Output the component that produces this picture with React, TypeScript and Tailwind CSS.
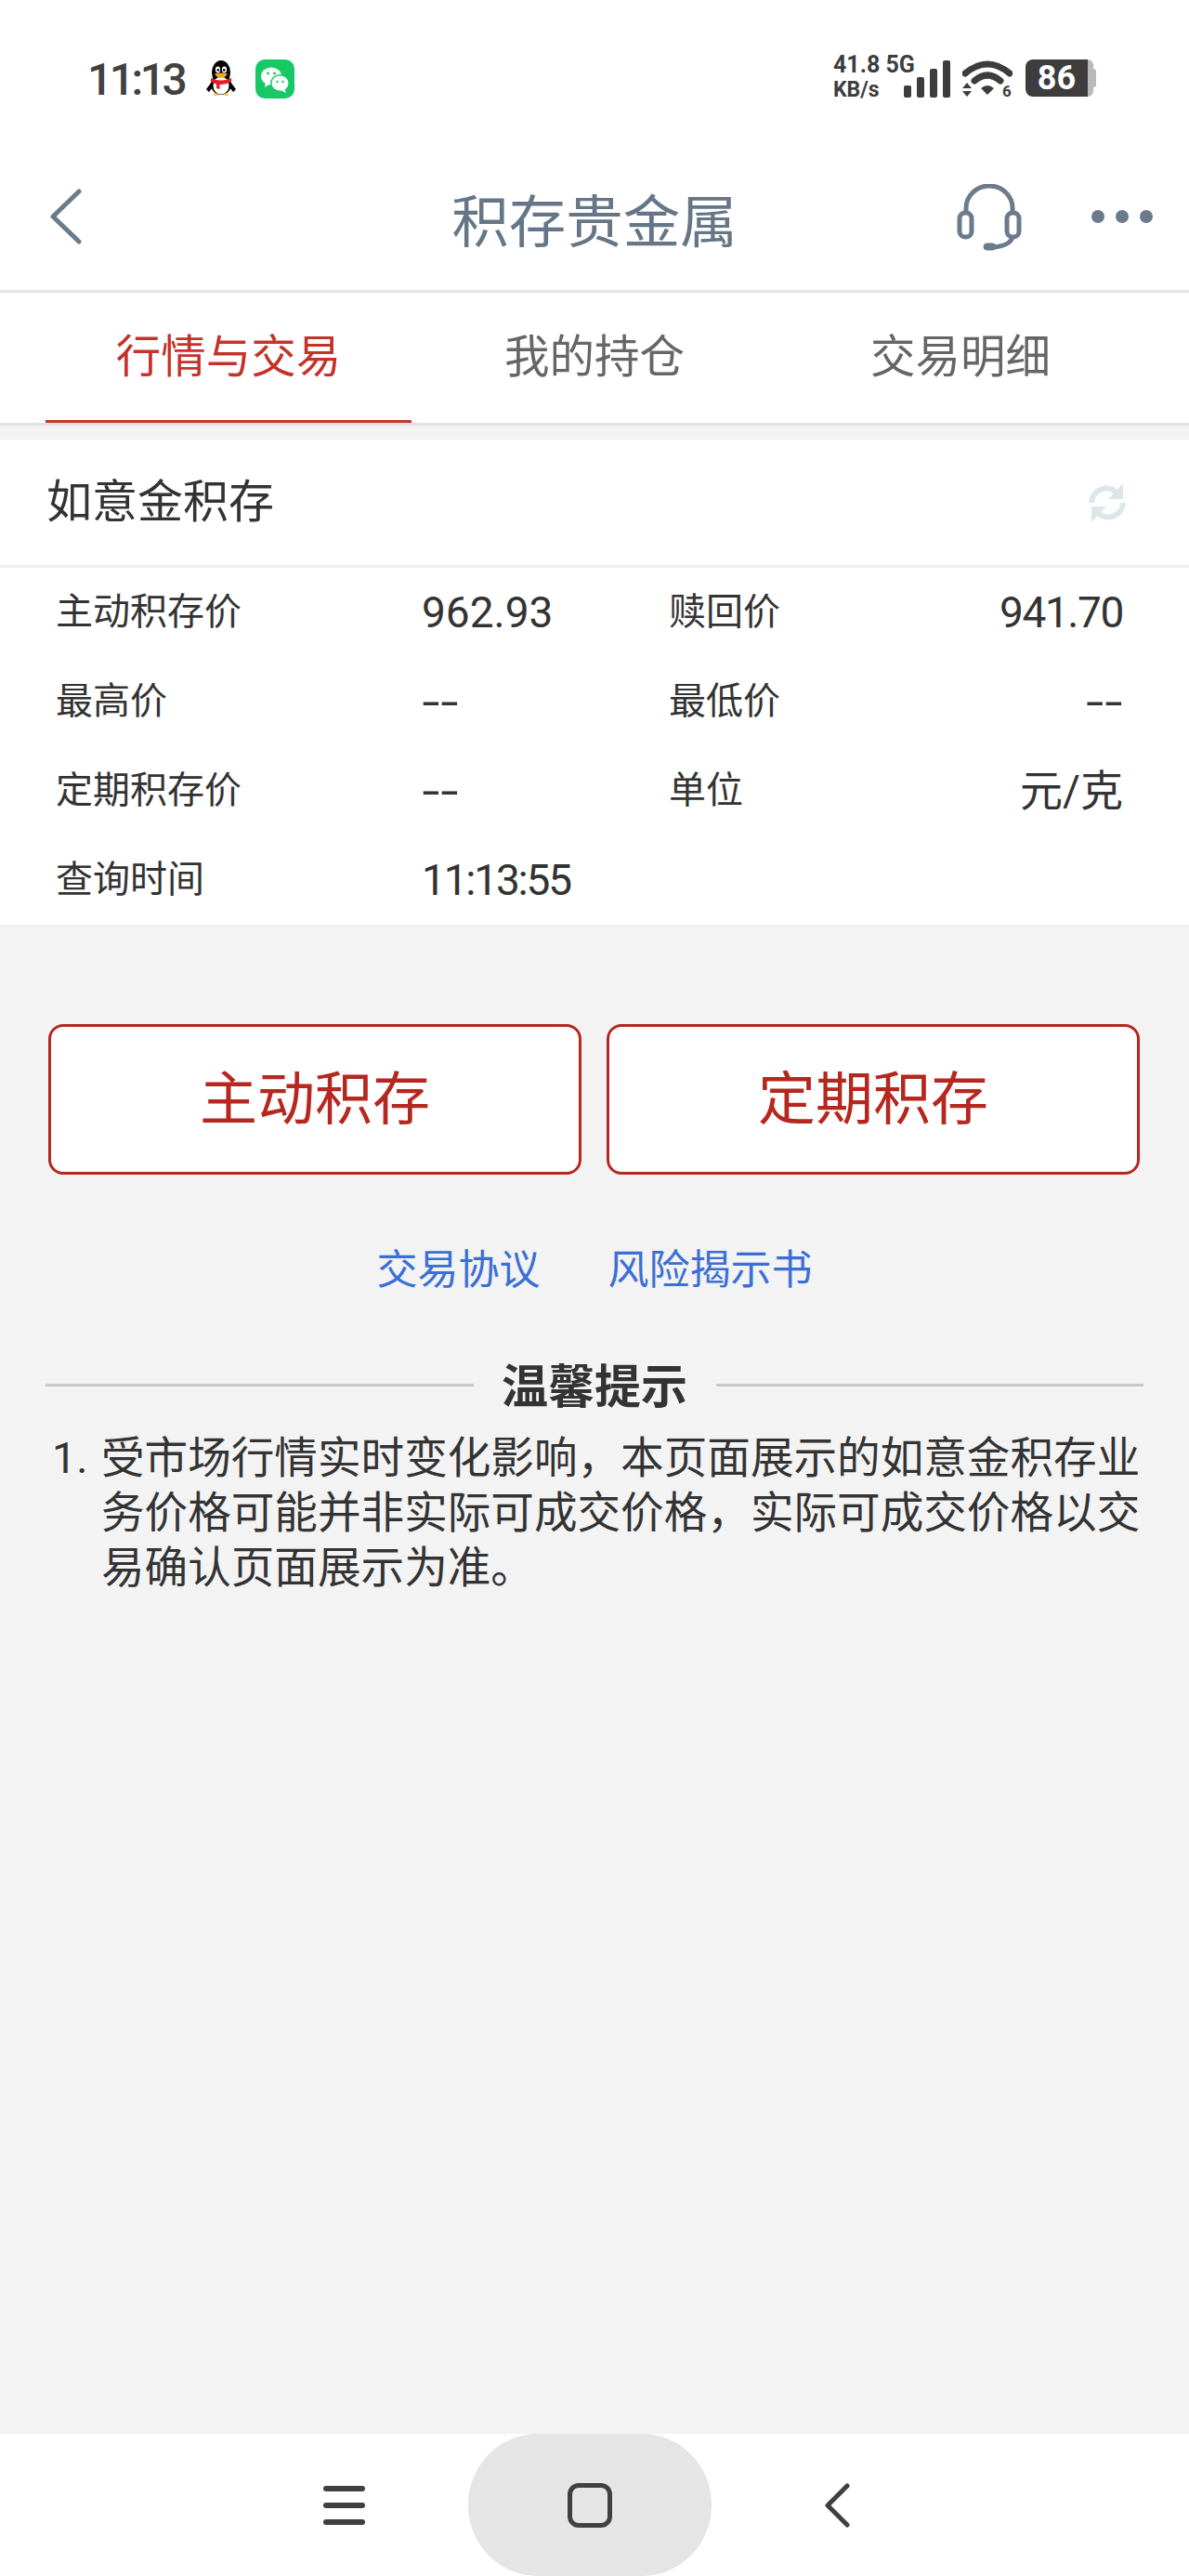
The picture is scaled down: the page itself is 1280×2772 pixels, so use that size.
const cjk = "font-['Roboto','Noto_Sans_CJK_SC',sans-serif]";

const dash = 'text-[70px] leading-none font-light';

const rows = [
  { label: '主动积存价', value: '962.93', cls: 'text-[46px]', label2: '赎回价', value2: '941.70', cls2: 'text-[46px] tracking-[-1.4px]' },
  { label: '最高价', value: '--', cls: dash, label2: '最低价', value2: '--', cls2: dash },
  { label: '定期积存价', value: '--', cls: dash, label2: '单位', value2: '元/克', cls2: 'text-[46px]' },
  { label: '查询时间', value: '11:13:55', cls: 'text-[46px] tracking-[-2.2px]', label2: '', value2: '', cls2: '' },
];

function QQIcon() {
  return (
    <svg width="32" height="38" viewBox="0 0 32 38">
      <ellipse cx="16" cy="13" rx="10" ry="13" fill="#000" />
      <ellipse cx="16" cy="26" rx="11" ry="11" fill="#000" />
      <ellipse cx="16" cy="27" rx="8.5" ry="9.5" fill="#fff" />
      <path d="M6 23 L0 31 L3 34 L7 29Z M26 23 L32 31 L29 34 L25 29Z" fill="#000" />
      <ellipse cx="12.5" cy="10" rx="2.6" ry="3.4" fill="#fff" />
      <ellipse cx="19.5" cy="10" rx="2.6" ry="3.4" fill="#fff" />
      <circle cx="12.8" cy="10.4" r="1.3" fill="#000" />
      <circle cx="19.2" cy="10.4" r="1.3" fill="#000" />
      <path d="M9 14.5 Q16 12.5 23 14.5 Q20 19 16 19 Q12 19 9 14.5Z" fill="#f3a81d" />
      <path d="M5 19 Q16 24 27 19 L27 23 Q22 26 14.5 26 L14.5 31 L11 30 L11 25.5 Q7 24.5 5 23Z" fill="#e2202c" />
      <path d="M8 36 Q11 34 14 37.5 L8 38Z M24 36 Q21 34 18 37.5 L24 38Z" fill="#f6c24a" />
    </svg>
  );
}

function WeChatIcon() {
  return (
    <svg width="42" height="42" viewBox="0 0 42 42">
      <rect width="42" height="42" rx="10" fill="#17c964" />
      <ellipse cx="17" cy="18" rx="11" ry="9.5" fill="#fff" />
      <path d="M11 24 L10 30 L16 26Z" fill="#fff" />
      <ellipse cx="26.5" cy="25.5" rx="10.5" ry="9.5" fill="#17c964" />
      <ellipse cx="26.5" cy="25.5" rx="9" ry="8" fill="#fff" />
      <path d="M31 31 L33 36 L27 33Z" fill="#fff" />
      <circle cx="13.5" cy="15" r="1.4" fill="#17c964" />
      <circle cx="20.5" cy="15" r="1.4" fill="#17c964" />
      <circle cx="23.5" cy="24" r="1.2" fill="#17c964" />
      <circle cx="29.5" cy="24" r="1.2" fill="#17c964" />
    </svg>
  );
}

function SignalIcon() {
  return (
    <svg width="50" height="40" viewBox="0 0 50 40" fill="#3d3d3d">
      <rect x="0" y="27" width="8" height="13" rx="2" />
      <rect x="14" y="18" width="8" height="22" rx="2" />
      <rect x="28" y="9" width="8" height="31" rx="2" />
      <rect x="42" y="0" width="8" height="40" rx="2" />
    </svg>
  );
}

function WifiIcon() {
  return (
    <svg width="54" height="42" viewBox="0 0 54 42" fill="none">
      <path d="M3 14 Q27 -6 51 14" stroke="#3d3d3d" strokeWidth="7" strokeLinecap="round" />
      <path d="M13 22 Q27 10 41 22" stroke="#3d3d3d" strokeWidth="7" strokeLinecap="round" />
      <path d="M20 30 Q27 24 34 30 L27 37Z" fill="#3d3d3d" />
      <path d="M5 24 L10 30 L0 30Z M0 33 L10 33 L5 39Z" fill="#3d3d3d" />
      <text x="43" y="39" fontSize="17" fontWeight="700" fill="#3d3d3d" fontFamily="Roboto, sans-serif">6</text>
    </svg>
  );
}

function HeadsetIcon() {
  return (
    <svg width="70" height="72" viewBox="0 0 70 72" fill="none" stroke="#6b7b8c" strokeWidth="5">
      <path d="M10 30 V26 A25 24 0 0 1 60 26 V30" />
      <rect x="3" y="31" width="13" height="26" rx="6" />
      <rect x="54" y="31" width="13" height="26" rx="6" />
      <path d="M60 57 Q58 66 40 68" />
      <rect x="29" y="64" width="13" height="7" rx="3.5" fill="#6b7b8c" strokeWidth="1" />
    </svg>
  );
}

function RefreshIcon() {
  return (
    <svg width="40" height="44" viewBox="0 0 40 44" fill="none" stroke="#dde7ea" strokeWidth="6">
      <path d="M3 22 A16 16 0 0 1 29 10" />
      <path d="M37 1 V18 H21Z" fill="#dde7ea" stroke="none" />
      <path d="M37 22 A16 16 0 0 1 11 34" />
      <path d="M3 43 V26 H19Z" fill="#dde7ea" stroke="none" />
    </svg>
  );
}

export default function App() {
  return (
    <div className={`w-[1280px] h-[2772px] flex flex-col bg-[#f3f3f4] overflow-hidden ${cjk}`}>
      {/* Status bar */}
      <div className="h-[167px] bg-white shrink-0 flex items-start pt-[65px] pl-[94px] pr-[100px]">
        <span className="text-[48px] leading-[50px] font-medium tracking-[-3.5px] text-[#414141] font-['Roboto',sans-serif] w-[128px] -mt-[4px]">11:13</span>
        <QQIcon />
        <div className="ml-[21px] -mt-[1px]"><WeChatIcon /></div>
        <div className="ml-auto flex items-start">
          <div className="w-[76px] font-['Roboto',sans-serif] font-bold text-[#3d3d3d] whitespace-nowrap -mt-[9px]">
            <div className="text-[25px] leading-[28px]">41.8 5G</div>
            <div className="text-[23px] leading-[25px]">KB/s</div>
          </div>
          <SignalIcon />
          <div className="ml-[13px]"><WifiIcon /></div>
          <div className="ml-[14px] -mt-[1px] w-[67px] h-[40px] rounded-l-[8px] bg-[#3d3d3d] flex items-center justify-center text-white font-['Roboto',sans-serif] font-bold text-[36px] leading-none">86</div>
          <div className="w-[6px] h-[40px] -mt-[1px] bg-[#b9b9b9] rounded-r-[6px]" />
          <div className="w-[3px] h-[20px] mt-[9px] bg-[#b9b9b9] rounded-r-[3px]" />
        </div>
      </div>

      {/* Title bar */}
      <div className="h-[148px] bg-white border-b-[3px] border-[#e6e6e6] shrink-0 flex items-center relative">
        <svg className="absolute left-[54px] top-[36px]" width="34" height="60" viewBox="0 0 34 60" fill="none" stroke="#6b7b8c" strokeWidth="5" strokeLinecap="round" strokeLinejoin="round">
          <path d="M31 3 L3 30 L31 57" />
        </svg>
        <div className="w-full text-center text-[61.5px] leading-[72px] text-[#667686]">积存贵金属</div>
        <div className="absolute left-[1030px] top-[31px]"><HeadsetIcon /></div>
        <div className="absolute left-[1175px] top-[59px] flex gap-[12px]">
          <div className="w-[14px] h-[14px] rounded-full bg-[#6b7b8c]" />
          <div className="w-[14px] h-[14px] rounded-full bg-[#6b7b8c]" />
          <div className="w-[14px] h-[14px] rounded-full bg-[#6b7b8c]" />
        </div>
      </div>

      {/* Tabs */}
      <div className="h-[143px] bg-white border-b-[3px] border-[#e0e0e0] shrink-0 flex px-[49px] text-[48.5px]">
        <div className="w-[394px] flex items-center justify-center text-[#c4332a] border-b-[3px] border-[#c8342b] pt-[3px]">行情与交易</div>
        <div className="w-[394px] flex items-center justify-center text-[#666]">我的持仓</div>
        <div className="w-[394px] flex items-center justify-center text-[#666]">交易明细</div>
      </div>

      {/* Price card */}
      <div className="mt-[15px] bg-white shrink-0">
        <div className="h-[138px] flex items-center justify-between pl-[50px] pr-[68px] border-b-[3px] border-[#efefef]">
          <span className="text-[49px] text-[#333]">如意金积存</span>
          <RefreshIcon />
        </div>
        {rows.map((r) => (
          <div key={r.label} className="h-[96px] flex items-center pl-[60px] pr-[71px] text-[40px] text-[#333]">
            <div className="w-[394px]">{r.label}</div>
            <div className={`w-[266px] ${r.cls}`}>{r.value}</div>
            <div className="w-[200px]">{r.label2}</div>
            <div className={`flex-1 text-right ${r.cls2}`}>{r.value2}</div>
          </div>
        ))}
      </div>

      {/* Actions */}
      <div className="mt-[107px] px-[52px] flex gap-[27px] shrink-0">
        <button className="w-[574px] h-[162px] rounded-[16px] border-[3px] border-[#b5271f] bg-white text-[62px] text-[#b5271f]">主动积存</button>
        <button className="w-[574px] h-[162px] rounded-[16px] border-[3px] border-[#b5271f] bg-white text-[62px] text-[#b5271f]">定期积存</button>
      </div>

      <div className="mt-[75px] flex justify-center gap-[73px] text-[44px] leading-[56px] text-[#3b6fd4] shrink-0">
        <span>交易协议</span>
        <span>风险揭示书</span>
      </div>

      {/* Tips */}
      <div className="mt-[66px] px-[49px] flex items-center shrink-0">
        <div className="flex-1 h-[3px] mb-[5px] bg-[#c8c8c8]" />
        <span className="w-[261px] text-center text-[50px] leading-[64px] font-bold text-[#333]">温馨提示</span>
        <div className="flex-1 h-[3px] mb-[5px] bg-[#c8c8c8]" />
      </div>
      <div className="mt-[15px] pl-[56px] pr-[50px] flex text-[46.6px] leading-[59px] text-[#333] shrink-0">
        <span className="w-[53px] shrink-0">1.</span>
        <p>受市场行情实时变化影响，本页面展示的如意金积存业务价格可能并非实际可成交价格，实际可成交价格以交易确认页面展示为准。</p>
      </div>

      {/* Navigation bar */}
      <div className="mt-auto h-[153px] bg-white shrink-0 flex items-center justify-center pr-[18px]">
        <div className="w-[45px] flex flex-col gap-[12px]">
          <div className="h-[6px] rounded-full bg-[#404040]" />
          <div className="h-[6px] rounded-full bg-[#404040]" />
          <div className="h-[6px] rounded-full bg-[#404040]" />
        </div>
        <div className="ml-[111px] w-[262px] h-[153px] bg-[#e5e5e5] rounded-[75px/76px] flex items-center justify-center">
          <div className="w-[48px] h-[48px] rounded-[12px] border-[5px] border-[#404040]" />
        </div>
        <svg className="ml-[121px]" width="28" height="48" viewBox="0 0 28 48" fill="none" stroke="#404040" strokeWidth="5" strokeLinecap="round" strokeLinejoin="round">
          <path d="M25 3 L4 24 L25 45" />
        </svg>
      </div>
    </div>
  );
}
